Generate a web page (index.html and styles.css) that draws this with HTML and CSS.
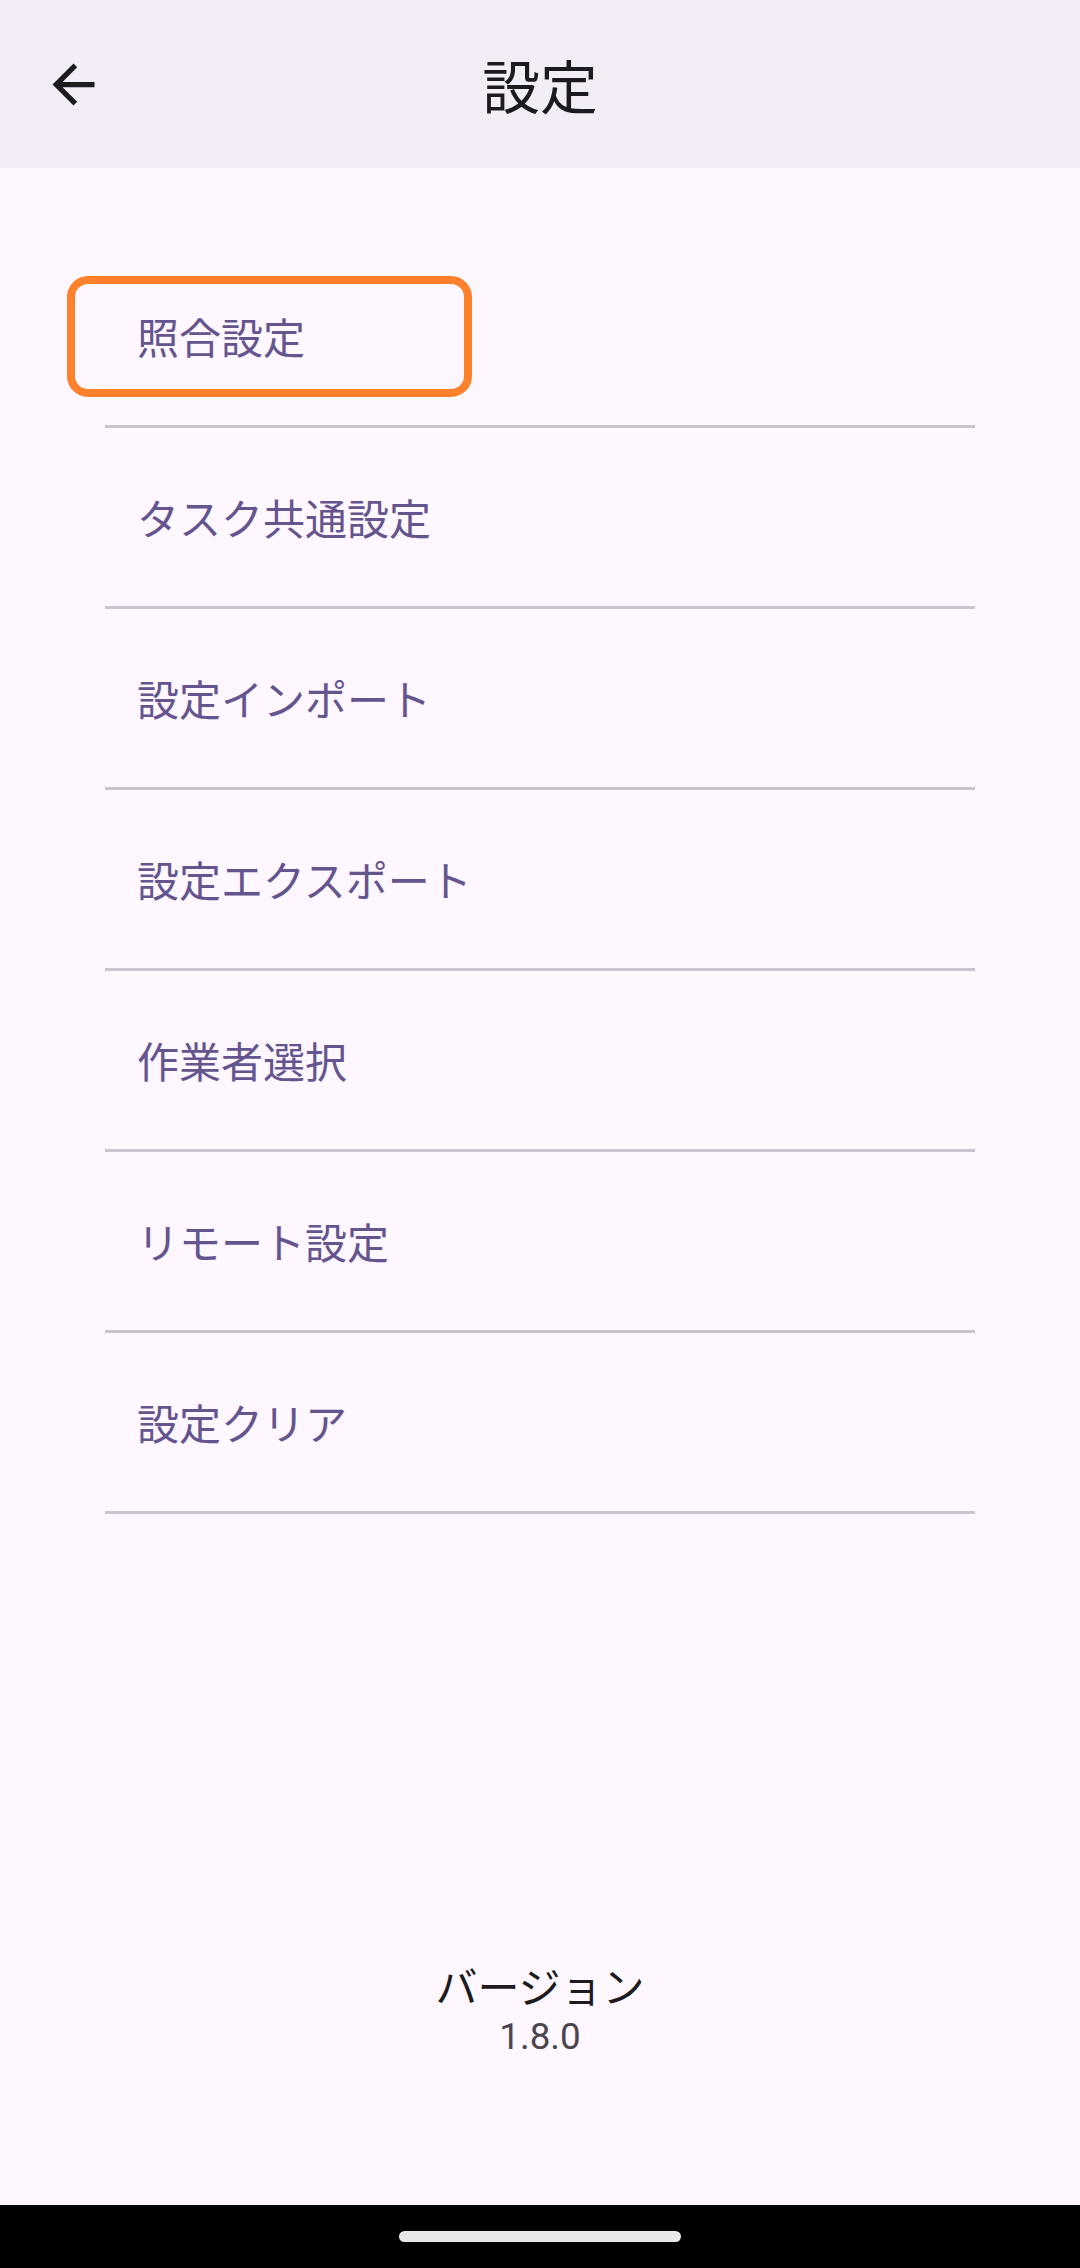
FILE: index.html
```html
<!DOCTYPE html>
<html lang="ja">
<head>
<meta charset="utf-8">
<title>設定</title>
<link rel="stylesheet" href="styles.css">
</head>
<body>
<div class="screen">
  <header class="topbar">
    <div class="topbar-left">
      <svg class="back-icon" viewBox="0 0 24 24" aria-hidden="true">
        <path d="M20 11H7.83l5.59-5.59L12 4l-8 8 8 8 1.41-1.41L7.83 13H20v-2z"/>
      </svg>
    </div>
    <h1 class="topbar-title">設定</h1>
    <div class="topbar-right"></div>
  </header>
  <main class="content">
    <ul class="menu">
      <li class="menu-item focused"><span class="label">照合設定</span></li>
      <li class="divider"></li>
      <li class="menu-item"><span class="label">タスク共通設定</span></li>
      <li class="divider"></li>
      <li class="menu-item"><span class="label">設定インポート</span></li>
      <li class="divider"></li>
      <li class="menu-item"><span class="label">設定エクスポート</span></li>
      <li class="divider"></li>
      <li class="menu-item"><span class="label">作業者選択</span></li>
      <li class="divider"></li>
      <li class="menu-item"><span class="label">リモート設定</span></li>
      <li class="divider"></li>
      <li class="menu-item"><span class="label">設定クリア</span></li>
      <li class="divider"></li>
    </ul>
    <div class="version">
      <div class="version-title">バージョン</div>
      <div class="version-number">1.8.0</div>
    </div>
  </main>
  <div class="navbar"><div class="nav-handle"></div></div>
</div>
</body>
</html>
```
FILE: styles.css
```css
* {
  box-sizing: border-box;
}

html, body {
  margin: 0;
  padding: 0;
}

body {
  width: 1080px;
  height: 2268px;
  background: #fef7ff;
  font-family: "Noto Sans CJK JP", "Roboto", sans-serif;
  overflow: hidden;
}

.screen {
  display: flex;
  flex-direction: column;
  width: 1080px;
  height: 2268px;
}

.topbar {
  flex: 0 0 168px;
  height: 168px;
  background: #f3edf7;
  display: grid;
  grid-template-columns: 1fr auto 1fr;
  align-items: center;
}

.topbar-left {
  display: flex;
  align-items: center;
  padding-left: 42px;
}

.back-icon {
  width: 63px;
  height: 63px;
  fill: #1d1b20;
  display: block;
}

.topbar-title {
  margin: 0;
  font-family: "Noto Sans CJK JP", sans-serif;
  font-weight: 400;
  font-size: 57.75px;
  line-height: 80px;
  color: #1d1b20;
}

.content {
  flex: 1 1 auto;
  display: flex;
  flex-direction: column;
  background: #fef7ff;
}

.menu {
  list-style: none;
  margin: 0;
  padding: 79px 105px 0 105px;
}

.menu-item {
  height: 178.4px;
  display: flex;
  align-items: center;
  padding-left: 32px;
}

.label {
  font-size: 42px;
  line-height: 60px;
  color: #65558f;
  white-space: nowrap;
}

.menu-item.focused {
  padding-left: 0;
}

.menu-item.focused .label {
  display: flex;
  align-items: center;
  margin-left: -38px;
  width: 405px;
  height: 121px;
  padding-left: 62px;
  border: 8px solid #fd812b;
  border-radius: 21px;
}

.divider {
  height: 2.625px;
  background: #cac4d0;
}

.version {
  margin-top: auto;
  padding-bottom: 147px;
  display: flex;
  flex-direction: column;
  align-items: center;
}

.version-title {
  font-size: 42px;
  line-height: 60px;
  color: #1d1b20;
}

.version-number {
  font-family: "Roboto", sans-serif;
  font-size: 36.75px;
  line-height: 43px;
  color: #49454f;
}

.navbar {
  flex: 0 0 63px;
  height: 63px;
  background: #000000;
  display: flex;
  align-items: center;
  justify-content: center;
}

.nav-handle {
  width: 282px;
  height: 10.5px;
  border-radius: 6px;
  background: #e8e8e8;
}
```
